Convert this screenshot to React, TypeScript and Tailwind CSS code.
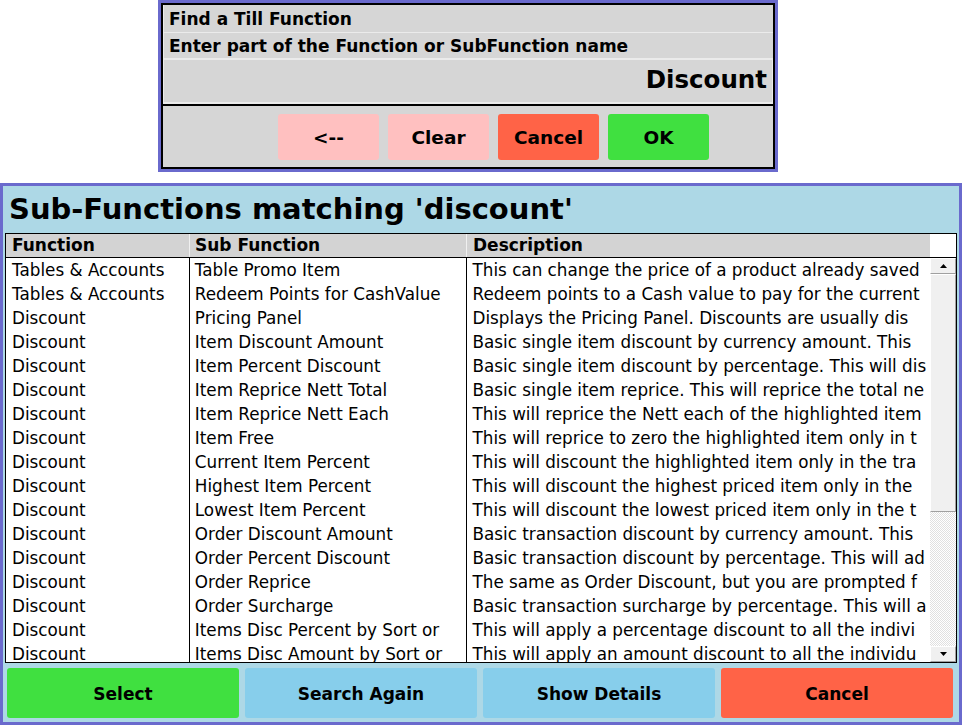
import React from 'react';

const FONT = "font-['DejaVu_Sans',sans-serif]";

const rows: [string, string, string][] = [
  ['Tables & Accounts', 'Table Promo Item', 'This can change the price of a product already saved'],
  ['Tables & Accounts', 'Redeem Points for CashValue', 'Redeem points to a Cash value to pay for the current'],
  ['Discount', 'Pricing Panel', 'Displays the Pricing Panel. Discounts are usually dis'],
  ['Discount', 'Item Discount Amount', 'Basic single item discount by currency amount. This'],
  ['Discount', 'Item Percent Discount', 'Basic single item discount by percentage. This will dis'],
  ['Discount', 'Item Reprice Nett Total', 'Basic single item reprice. This will reprice the total ne'],
  ['Discount', 'Item Reprice Nett Each', 'This will reprice the Nett each of the highlighted item'],
  ['Discount', 'Item Free', 'This will reprice to zero the highlighted item only in t'],
  ['Discount', 'Current Item Percent', 'This will discount the highlighted item only in the tra'],
  ['Discount', 'Highest Item Percent', 'This will discount the highest priced item only in the'],
  ['Discount', 'Lowest Item Percent', 'This will discount the lowest priced item only in the t'],
  ['Discount', 'Order Discount Amount', 'Basic transaction discount by currency amount. This'],
  ['Discount', 'Order Percent Discount', 'Basic transaction discount by percentage. This will ad'],
  ['Discount', 'Order Reprice', 'The same as Order Discount, but you are prompted f'],
  ['Discount', 'Order Surcharge', 'Basic transaction surcharge by percentage. This will a'],
  ['Discount', 'Items Disc Percent by Sort or', 'This will apply a percentage discount to all the indivi'],
  ['Discount', 'Items Disc Amount by Sort or', 'This will apply an amount discount to all the individu'],
];

function ScrollButton({ up }: { up?: boolean }) {
  return (
    <div className="h-[16px] bg-[#f0f0f0] border border-t-white border-l-white border-r-[#a0a0a0] border-b-[#a0a0a0] flex items-center justify-center shrink-0">
      <svg width="7" height="4" viewBox="0 0 7 4">
        <path d={up ? 'M0 4 L3.5 0 L7 4 Z' : 'M0 0 L3.5 4 L7 0 Z'} fill="#000" />
      </svg>
    </div>
  );
}

export default function App() {
  return (
    <div className={`w-[962px] h-[725px] bg-white ${FONT} text-black relative overflow-hidden`}>
      {/* search dialog */}
      <div className="ml-[158px] w-[620px] h-[172px] border-[3px] border-[#6a6acd]">
        <div className="h-full border-2 border-black bg-[#d6d6d6] flex flex-col">
          <div className="h-[28px] flex items-center px-[5px] pt-[3px] border-b border-[#ebebeb] border-l border-l-[#ebebeb] text-[17px] font-bold">
            Find a Till Function
          </div>
          <div className="h-[27px] flex items-center px-[5px] pt-[3px] border-b-2 border-[#ebebeb] border-l border-l-[#ebebeb] text-[17px] font-bold">
            Enter part of the Function or SubFunction name
          </div>
          <div className="h-[44px] flex items-center justify-end px-[5px] pb-[2px] border-b-2 border-[#ebebeb] border-x border-x-[#ebebeb] text-[24.5px] font-bold">
            Discount
          </div>
          <div className="flex-1 border-t-2 border-black flex items-center gap-[9px] pl-[115px]">
            <button className="w-[101px] h-[46px] pt-[2px] rounded-[3px] bg-[#ffc0c0] text-[18.5px] font-bold">&lt;--</button>
            <button className="w-[101px] h-[46px] pt-[2px] rounded-[3px] bg-[#ffc0c0] text-[18.5px] font-bold">Clear</button>
            <button className="w-[101px] h-[46px] pt-[2px] rounded-[3px] bg-[#ff6347] text-[18.5px] font-bold">Cancel</button>
            <button className="w-[101px] h-[46px] pt-[2px] rounded-[3px] bg-[#40e040] text-[18.5px] font-bold">OK</button>
          </div>
        </div>
      </div>

      {/* results panel */}
      <div className="absolute left-0 top-[183px] w-[962px] h-[542px] border-[3px] border-[#6a6acd] bg-[#add8e6] flex flex-col">
        <div className="h-[47px] flex items-center pl-[6px] text-[29px] font-bold">
          Sub-Functions matching 'discount'
        </div>
        <div className="mx-[2px] h-[430px] border border-black bg-white flex flex-col overflow-hidden">
          <div className="h-[24px] flex text-[17px] font-bold border-b border-black shrink-0">
            <div className="w-[184px] bg-[#d3d3d3] border-r border-[#f0f0f0] pl-[6px] leading-[23px]">Function</div>
            <div className="w-[277px] bg-[#d3d3d3] border-r border-[#f0f0f0] pl-[5px] leading-[23px]">Sub Function</div>
            <div className="w-[463px] bg-[#d3d3d3] pl-[6px] leading-[23px]">Description</div>
            <div className="flex-1 bg-white" />
          </div>
          <div className="flex-1 flex min-h-0">
            <div className="w-[924px] overflow-hidden text-[16.8px]">
              {rows.map((r, i) => (
                <div key={i} className="flex h-[24px] leading-[24px] whitespace-nowrap">
                  <div className="w-[184px] border-r border-black pl-[6px] overflow-hidden">{r[0]}</div>
                  <div className="w-[277px] border-r border-black pl-[5px] overflow-hidden">{r[1]}</div>
                  <div className="w-[463px] pl-[6px] overflow-hidden">{r[2]}</div>
                </div>
              ))}
            </div>
            <div className="w-[26px] ml-[1px] flex flex-col">
              <ScrollButton up />
              <div className="h-[238px] bg-[#f0f0f0] border border-t-white border-l-white border-r-[#a0a0a0] border-b-[#a0a0a0]" />
              <div className="flex-1 bg-[repeating-conic-gradient(#ffffff_0_25%,#e0e0e0_0_50%)] bg-[length:2px_2px]" />
              <ScrollButton />
            </div>
          </div>
        </div>
        <div className="flex-1 grid grid-cols-4 gap-[6px] pl-[4px] pr-[6px] pt-[5px] pb-[4px] text-[17px] font-bold">
          <button className="pt-[3px] rounded-[3px] bg-[#40e040]">Select</button>
          <button className="pt-[3px] rounded-[3px] bg-[#87ceeb]">Search Again</button>
          <button className="pt-[3px] rounded-[3px] bg-[#87ceeb]">Show Details</button>
          <button className="pt-[3px] rounded-[3px] bg-[#ff6347]">Cancel</button>
        </div>
      </div>
    </div>
  );
}
